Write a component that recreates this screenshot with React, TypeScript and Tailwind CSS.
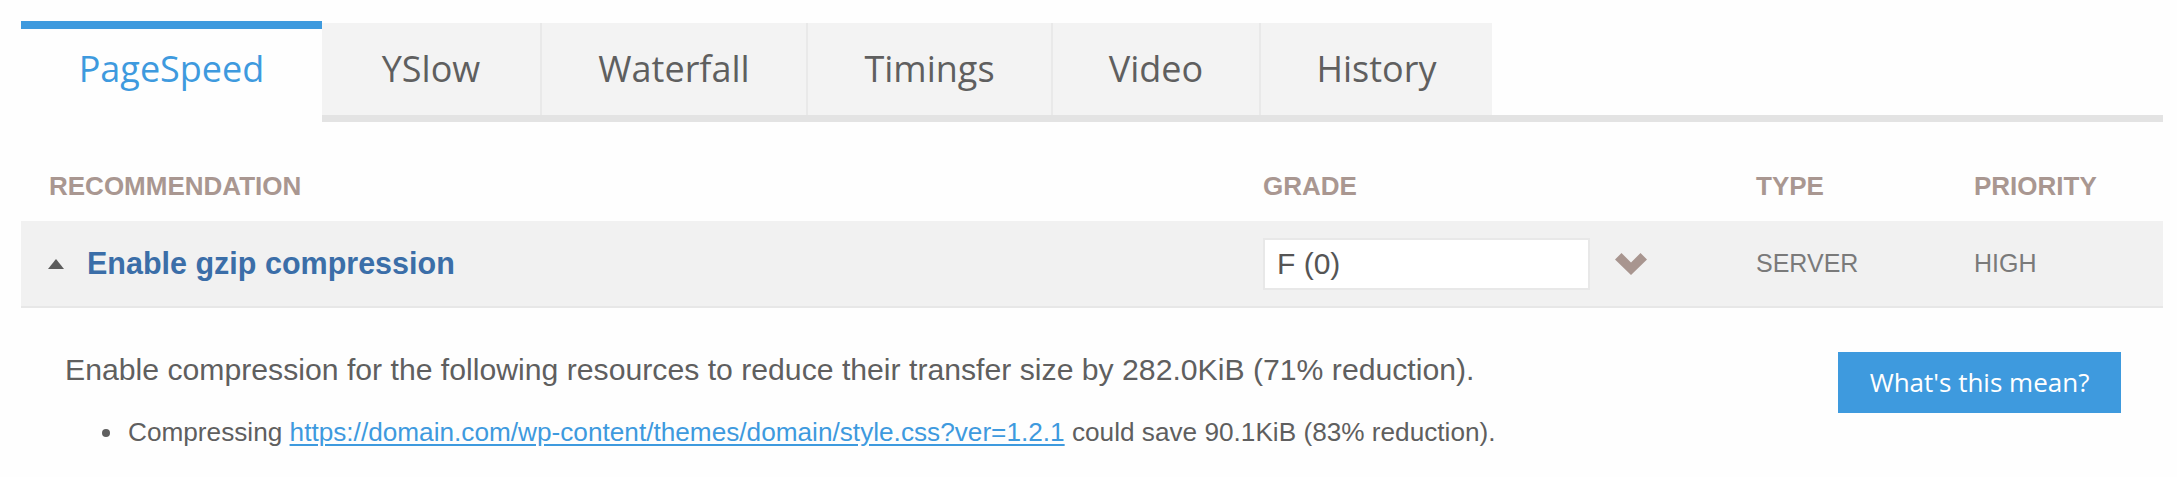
import React from 'react';

const tabs = [
  { label: 'YSlow', w: 'w-[218px]' },
  { label: 'Waterfall', w: 'w-[266px]' },
  { label: 'Timings', w: 'w-[245px]' },
  { label: 'Video', w: 'w-[208px]' },
  { label: 'History', w: 'w-[233px]' },
];

function Chevron() {
  return (
    <svg width="32" height="22" viewBox="0 0 32 22" className="block">
      <polygon points="0,6.5 6.5,0 16,9.5 25.5,0 32,6.5 16,22" fill="#a8958f" />
    </svg>
  );
}

export default function App() {
  return (
    <div className="w-[2177px] h-[477px] bg-[#fefefe] pl-[21px] font-['Liberation_Sans',Arial,sans-serif]">
      <div className="w-[2142px]">
        {/* Tabs */}
        <div className="flex items-start pt-[21px] font-['Open_Sans',sans-serif]">
          <div className="w-[301px] h-[101px] border-t-[8px] border-[#3e9ade] bg-[#fefefe] flex items-center justify-center pb-[14px] text-[36px] text-[#3e9ade]">
            PageSpeed
          </div>
          <div className="flex-1 flex flex-col">
            <div className="flex h-[94px] pt-[2px]">
              {tabs.map((t) => (
                <div
                  key={t.label}
                  className={`${t.w} h-[92px] bg-[#f3f3f3] border-l-2 border-[#e9e9e9] first:border-l-0 flex items-center justify-center text-[36px] text-[#5f5f5f]`}
                >
                  {t.label}
                </div>
              ))}
            </div>
            <div className="h-[7px] bg-[#e3e3e3]" />
          </div>
        </div>

        {/* Table header */}
        <div className="grid grid-cols-[1242px_493px_218px_1fr] pt-[49px] pb-[20px] text-[26px] leading-[30px] font-bold text-[#a99791] uppercase">
          <div className="pl-[28px]">Recommendation</div>
          <div>Grade</div>
          <div>Type</div>
          <div>Priority</div>
        </div>

        {/* Recommendation row */}
        <div className="grid grid-cols-[1242px_493px_218px_1fr] items-center h-[87px] bg-[#f1f1f1] border-b-2 border-[#e7e7e7]">
          <div className="flex items-center pl-[27px]">
            <svg width="16" height="10" viewBox="0 0 16 10" className="block">
              <polygon points="8,0 16,10 0,10" fill="#5c5c5c" />
            </svg>
            <span className="ml-[23px] text-[30.5px] font-bold text-[#3b6ea8]">Enable gzip compression</span>
          </div>
          <div className="flex items-center">
            <div className="w-[327px] h-[52px] bg-white border-2 border-[#e8e8e8] flex items-center pl-[12px] text-[30px] text-[#555555]">
              F (0)
            </div>
            <div className="ml-[25px]">
              <Chevron />
            </div>
          </div>
          <div className="text-[25px] text-[#7a7a7a]">SERVER</div>
          <div className="text-[25px] text-[#7a7a7a]">HIGH</div>
        </div>

        {/* Details */}
        <div className="flex justify-between items-start pt-[44px] pr-[42px]">
          <div className="pl-[44px] text-[#5f5f5f]">
            <p className="text-[30.2px] leading-[34px] mt-[1px]">
              Enable compression for the following resources to reduce their transfer size by 282.0KiB (71% reduction).
            </p>
            <ul className="mt-[30px] pl-[60px] list-disc text-[26.2px] leading-[30px] marker:text-[#5f5f5f]">
              <li className="pl-[3px]">
                Compressing{' '}
                <a href="#" className="text-[#3e9ade] underline underline-offset-[3px]">
                  https://domain.com/wp-content/themes/domain/style.css?ver=1.2.1
                </a>{' '}
                could save 90.1KiB (83% reduction).
              </li>
            </ul>
          </div>
          <button className="w-[283px] h-[61px] bg-[#3e9ade] text-white text-[26px] font-['Open_Sans',sans-serif] flex items-center justify-center">
            What's this mean?
          </button>
        </div>
      </div>
    </div>
  );
}
